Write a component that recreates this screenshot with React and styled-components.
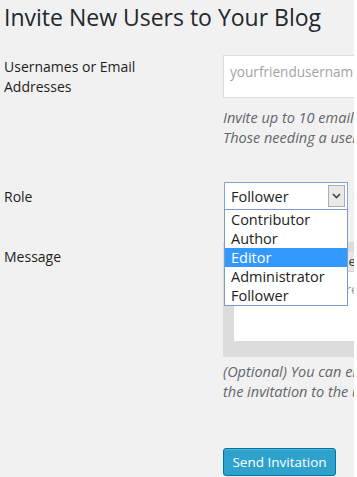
import React from "react";
import styled, { createGlobalStyle } from "styled-components";

const GlobalStyle = createGlobalStyle`
  html, body {
    margin: 0;
    padding: 0;
    background: #ffffff;
  }
  body {
    font-family: "Open Sans", "Noto Sans", sans-serif;
  }
`;

const Page = styled.div`
  width: 354px;
  height: 477px;
  background: #f1f1f1;
  overflow: hidden;
  color: #222;
`;

const Title = styled.h2`
  margin: 0;
  padding: 0 0 0 4px;
  font-size: 23px;
  font-weight: 400;
  line-height: 34px;
  color: #23282d;
  white-space: nowrap;
`;

const Form = styled.div`
  display: flex;
  flex-direction: column;
`;

const Row = styled.div`
  display: grid;
  grid-template-columns: 223px 480px;
  margin-top: ${(p) => p.$top}px;
`;

const Label = styled.div`
  max-width: 160px;
  padding: ${(p) => p.$pad}px 0 0 4px;
  font-size: 14px;
  font-weight: 500;
  line-height: 20px;
  color: #1e1e1e;
`;

const Field = styled.div`
  display: flex;
  flex-direction: column;
  align-items: flex-start;
  position: relative;
`;

const TextInput = styled.div`
  box-sizing: border-box;
  width: 100%;
  height: 43px;
  background: #fff;
  border: 1px solid #ddd;
  padding: 6px 6px;
  font-size: 13.6px;
  line-height: 20px;
  color: #a4a4a4;
  white-space: nowrap;
`;

const Description = styled.p`
  margin: ${(p) => p.$top}px 0 0;
  font-size: 14.5px;
  font-style: italic;
  line-height: 20px;
  color: #62666b;
  white-space: nowrap;
`;

const SelectWrap = styled.div`
  display: flex;
  align-items: center;
`;

const SelectBox = styled.div`
  box-sizing: border-box;
  width: 124px;
  height: 28px;
  margin-left: 1px;
  border: 1px solid #7fa6d6;
  background: #fff;
  display: flex;
  align-items: center;
  justify-content: space-between;
  padding: 0 2px 0 6px;
  font-size: 14.5px;
  color: #222;
`;

const Arrow = styled.div`
  box-sizing: border-box;
  width: 17px;
  height: 22px;
  background: #e9e9e9;
  border: 1px solid #adadad;
  display: flex;
  align-items: center;
  justify-content: center;
`;

const RoleNote = styled.span`
  margin-left: 5px;
  font-size: 13px;
  color: #7a8591;
  white-space: nowrap;
`;

const Dropdown = styled.ul`
  position: absolute;
  left: 1px;
  top: 27px;
  z-index: 5;
  box-sizing: border-box;
  width: 124px;
  margin: 0;
  padding: 0;
  list-style: none;
  background: #fff;
  border: 1px solid #7a9cc6;
`;

const Option = styled.li`
  height: 19px;
  padding-left: 6px;
  font-size: 14.5px;
  line-height: 19px;
  color: ${(p) => (p.$active ? "#fff" : "#222")};
  background: ${(p) => (p.$active ? "#3399ff" : "transparent")};
`;

const Editor = styled.div`
  box-sizing: border-box;
  width: 100%;
  height: 115px;
  background: #dcdcdc;
  padding: 10px 0 16px 11px;
`;

const EditorInner = styled.div`
  height: 100%;
  background: #fff;
  display: flex;
  flex-direction: column;
`;

const EditorBar = styled.div`
  height: 19px;
  background: #e8e8e8;
  border-bottom: 1px solid #d4d4d4;
  padding-left: 8px;
  font-size: 13px;
  line-height: 19px;
  color: #333;
  white-space: nowrap;
`;

const EditorText = styled.div`
  padding: 8px 0 0 8px;
  font-size: 13px;
  color: #999;
  white-space: nowrap;
`;

const Button = styled.button`
  box-sizing: border-box;
  width: 113px;
  height: 28px;
  margin: 0;
  padding: 0;
  background: #2ea2cc;
  border: 1px solid #0074a2;
  border-radius: 3px;
  box-shadow: inset 0 1px 0 rgba(120, 200, 230, 0.5);
  font-family: inherit;
  font-size: 13.5px;
  color: #fff;
  cursor: pointer;
`;

const roles = ["Contributor", "Author", "Editor", "Administrator", "Follower"];

export default function App() {
  return (
    <>
      <GlobalStyle />
      <Page>
        <Title>Invite New Users to Your Blog</Title>
        <Form>
          <Row $top={21}>
            <Label $pad={2}>Usernames or Email Addresses</Label>
            <Field>
              <TextInput>yourfriendusername, email@example.com</TextInput>
              <Description $top={10}>
                Invite up to 10 email addresses and/or WordPress.com usernames.
                <br />
                Those needing a username will be sent instructions on how to create one.
              </Description>
            </Field>
          </Row>
          <Row $top={34}>
            <Label $pad={5}>Role</Label>
            <Field>
              <SelectWrap>
                <SelectBox>
                  Follower
                  <Arrow>
                    <svg width="9" height="6" viewBox="0 0 9 6">
                      <path d="M1 1l3.5 3.5L8 1" fill="none" stroke="#444" strokeWidth="1.6" />
                    </svg>
                  </Arrow>
                </SelectBox>
                <RoleNote>Learn more about roles</RoleNote>
              </SelectWrap>
              <Dropdown>
                {roles.map((r) => (
                  <Option key={r} $active={r === "Editor"}>
                    {r}
                  </Option>
                ))}
              </Dropdown>
            </Field>
          </Row>
          <Row $top={32}>
            <Label $pad={5}>Message</Label>
            <Field>
              <Editor>
                <EditorInner>
                  <EditorBar>Add a personal message to the invitation</EditorBar>
                  <EditorText>Your message here</EditorText>
                </EditorInner>
              </Editor>
              <Description $top={5}>
                (Optional) You can enter a custom message of up to 500 characters that will be included in
                <br />
                the invitation to the user(s).
              </Description>
            </Field>
          </Row>
          <Row $top={46}>
            <div />
            <Field>
              <Button>Send Invitation</Button>
            </Field>
          </Row>
        </Form>
      </Page>
    </>
  );
}
